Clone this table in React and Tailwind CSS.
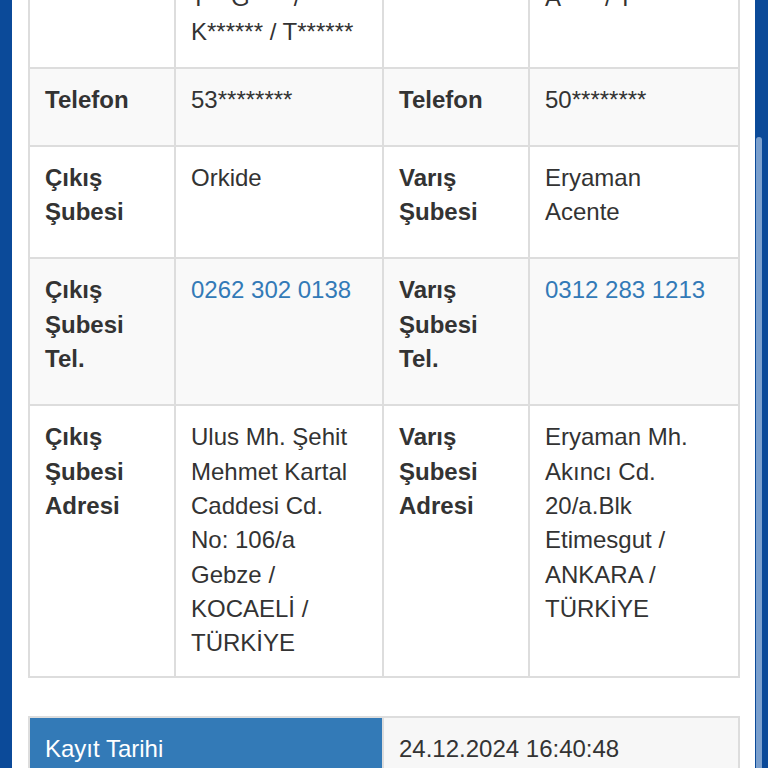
import React from 'react';

const rows = [
  {
    cells: [
      { kind: 'label', text: '' },
      { kind: 'text', lines: ['T** G**** /', 'K****** / T******'] },
      { kind: 'label', text: '' },
      { kind: 'text', lines: ['A**** / T*****'] },
    ],
    bg: 'bg-white',
    pad: 'pt-[14px] pb-[17px]',
  },
  {
    cells: [
      { kind: 'label', text: 'Telefon' },
      { kind: 'text', lines: ['53********'] },
      { kind: 'label', text: 'Telefon' },
      { kind: 'text', lines: ['50********'] },
    ],
    bg: 'bg-[#f9f9f9]',
    pad: 'pt-[14px] pb-[28px]',
  },
  {
    cells: [
      { kind: 'label', text: 'Çıkış Şubesi' },
      { kind: 'text', lines: ['Orkide'] },
      { kind: 'label', text: 'Varış Şubesi' },
      { kind: 'text', lines: ['Eryaman', 'Acente'] },
    ],
    bg: 'bg-white',
    pad: 'pt-[14px] pb-[28px]',
  },
  {
    cells: [
      { kind: 'label', text: 'Çıkış Şubesi Tel.' },
      { kind: 'link', text: '0262 302 0138' },
      { kind: 'label', text: 'Varış Şubesi Tel.' },
      { kind: 'link', text: '0312 283 1213' },
    ],
    bg: 'bg-[#f9f9f9]',
    pad: 'pt-[14px] pb-[28px]',
  },
  {
    cells: [
      { kind: 'label', text: 'Çıkış Şubesi Adresi' },
      { kind: 'text', lines: ['Ulus Mh. Şehit Mehmet Kartal Caddesi Cd. No: 106/a Gebze / KOCAELİ / TÜRKİYE'] },
      { kind: 'label', text: 'Varış Şubesi Adresi' },
      { kind: 'text', lines: ['Eryaman Mh. Akıncı Cd. 20/a.Blk Etimesgut / ANKARA / TÜRKİYE'] },
    ],
    bg: 'bg-white',
    pad: 'pt-[14px] pb-[16px]',
  },
];

const Cell = ({ cell, bg, pad }) => (
  <div className={`border-r-2 border-b-2 border-[#dddddd] px-[15px] ${pad} ${bg}`}>
    {cell.kind === 'label' && <b className="font-bold">{cell.text}</b>}
    {cell.kind === 'link' && <a className="text-[#337ab7]">{cell.text}</a>}
    {cell.kind === 'text' &&
      cell.lines.map((line, i) => <div key={i}>{line}</div>)}
  </div>
);

export default function App() {
  return (
    <div
      className="flex h-screen w-full overflow-hidden bg-white text-[24px] leading-[34.3px] text-[#333333]"
      style={{ fontFamily: '"Liberation Sans", Arial, sans-serif' }}
    >
      {/* left frame */}
      <div className="w-[12px] shrink-0 bg-[#0b4a99]" />

      {/* page */}
      <div className="flex-1 pl-[16px] pr-[15px]">
        <div className="-mt-[35px] grid grid-cols-[146px_208px_146px_210px] border-l-2 border-t-2 border-[#dddddd]">
          {rows.map((row, r) =>
            row.cells.map((cell, c) => (
              <Cell key={`${r}-${c}`} cell={cell} bg={row.bg} pad={row.pad} />
            ))
          )}
        </div>

        <div className="mt-[38px] grid grid-cols-[354px_356px] border-l-2 border-t-2 border-[#dddddd]">
          <div className="border-r-2 border-b-2 border-[#dddddd] bg-[#337ab7] px-[15px] pt-[14px] pb-[28px] text-white">
            Kayıt Tarihi
          </div>
          <div className="border-r-2 border-b-2 border-[#dddddd] bg-[#f7f7f7] px-[15px] pt-[14px] pb-[28px]">
            24.12.2024 16:40:48
          </div>
        </div>
      </div>

      {/* right frame with scrollbar */}
      <div className="flex w-[13px] shrink-0 bg-[#0b4a99] pt-[137px]">
        <div className="ml-[1px] w-[6px] rounded-t-full bg-[#7a9fcd]" />
      </div>
    </div>
  );
}
